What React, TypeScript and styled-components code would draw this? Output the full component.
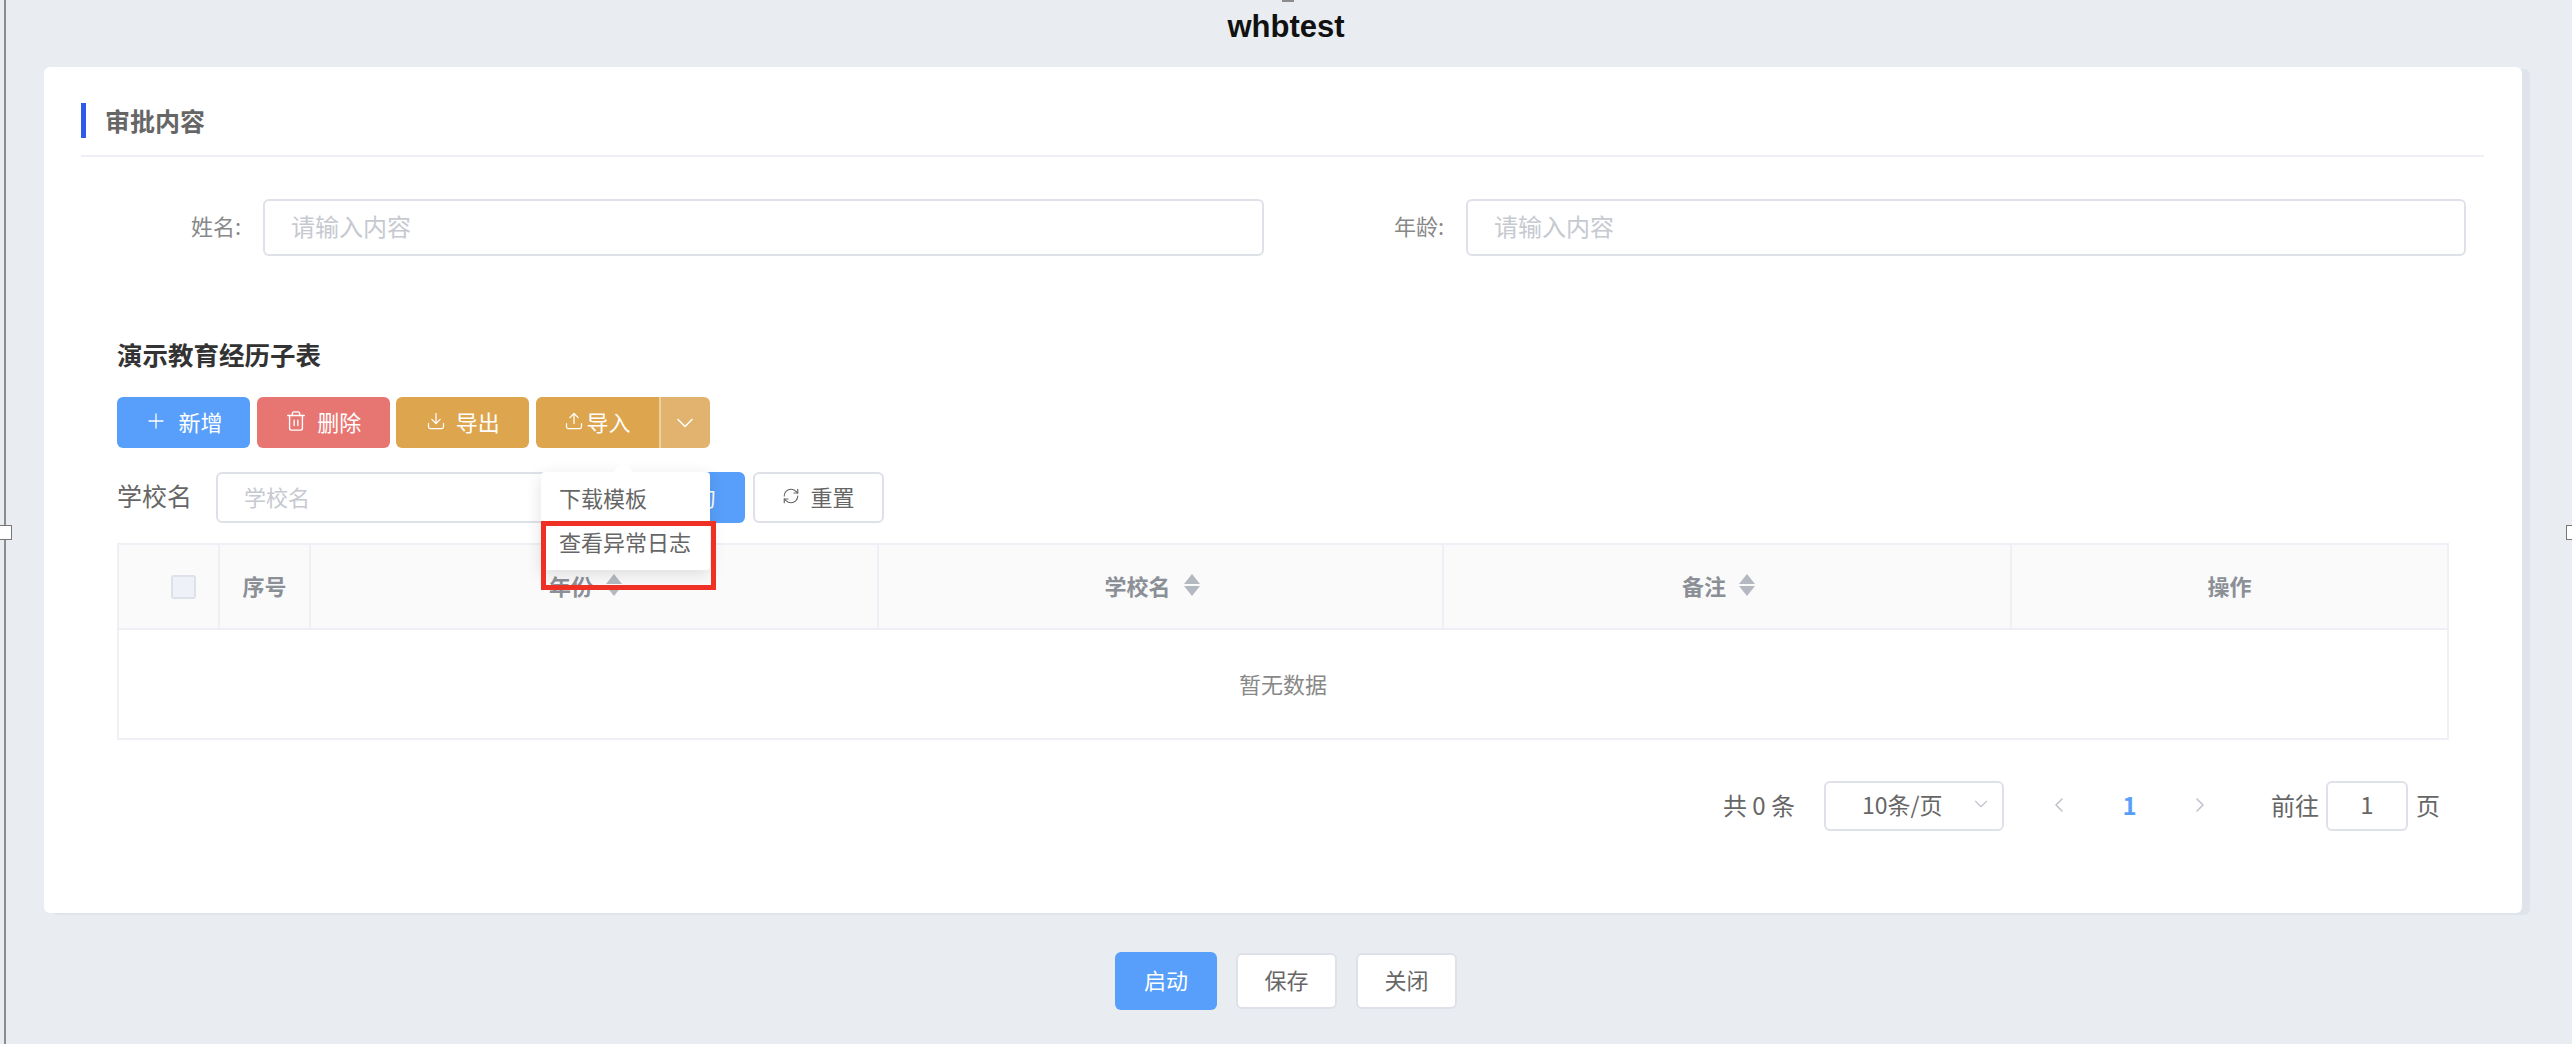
import React from "react";
import styled, { createGlobalStyle } from "styled-components";
import { Plus, Trash2, Download, Upload, ChevronDown, ChevronLeft, ChevronRight, RefreshCw, Search } from "lucide-react";

const Global = createGlobalStyle`
  html, body {
    margin: 0;
    padding: 0;
    background: #e9edf2;
  }
  * {
    box-sizing: border-box;
  }
  input::placeholder {
    color: #c6c9d0;
    opacity: 1;
  }
`;

const SortIcon = () => (
  <SortSvg width="18" height="24" viewBox="0 0 18 24">
    <path d="M9 1 L17 11 L1 11 Z" fill="#b4b8c0" />
    <path d="M9 23 L17 13 L1 13 Z" fill="#b4b8c0" />
  </SortSvg>
);

const columns = [
  { title: "年份", sort: true },
  { title: "学校名", sort: true },
  { title: "备注", sort: true },
  { title: "操作", sort: false },
];

const App = () => {
  return (
    <Page>
      <Global />
      <FrameLine />
      <Handle $side="left" />
      <Handle $side="right" />
      <TopTick />
      <Title>whbtest</Title>
      <Card>
        <SectionTitle>审批内容</SectionTitle>
        <FormRow>
          <FormLabel>姓名:</FormLabel>
          <TextInput placeholder="请输入内容" />
          <FormLabel>年龄:</FormLabel>
          <TextInput placeholder="请输入内容" />
        </FormRow>
        <SubTable>
          <SubHeading>演示教育经历子表</SubHeading>
          <Toolbar>
            <ActionButton $bg="#589ffb">
              <Plus size={24} strokeWidth={1.3} />
              新增
            </ActionButton>
            <ActionButton $bg="#e77572">
              <Trash2 size={22} strokeWidth={1.5} />
              删除
            </ActionButton>
            <ActionButton $bg="#dca54e">
              <Download size={20} strokeWidth={1.5} />
              导出
            </ActionButton>
            <ImportGroup>
              <ImportMain>
                <Upload size={20} strokeWidth={1.5} />
                导入
              </ImportMain>
              <ImportCaret>
                <ChevronDown size={28} strokeWidth={1.3} />
              </ImportCaret>
              <Menu>
                <MenuItem>下载模板</MenuItem>
                <MenuItem>查看异常日志</MenuItem>
              </Menu>
              <RedMark />
            </ImportGroup>
          </Toolbar>
          <SearchRow>
            <SearchLabel>学校名</SearchLabel>
            <SearchInput placeholder="学校名" />
            <SearchButton>
              <Search size={18} strokeWidth={1.5} />
              查询
            </SearchButton>
            <ResetButton>
              <RefreshCw size={18} strokeWidth={1.5} />
              重置
            </ResetButton>
          </SearchRow>
          <Table>
            <HeadRow>
              <HeadCell>
                <CheckBox />
              </HeadCell>
              <HeadCell>序号</HeadCell>
              {columns.map((c) => (
                <HeadCell key={c.title}>
                  {c.title}
                  {c.sort && <SortIcon />}
                </HeadCell>
              ))}
            </HeadRow>
            <EmptyRow>暂无数据</EmptyRow>
          </Table>
          <Pager>
            <PagerText>共 0 条</PagerText>
            <PageSize>
              10条/页
              <ChevronDown size={22} strokeWidth={1.2} color="#c0c4cc" />
            </PageSize>
            <PageArrow>
              <ChevronLeft size={26} strokeWidth={1.6} />
            </PageArrow>
            <PageNumber>1</PageNumber>
            <PageArrow>
              <ChevronRight size={26} strokeWidth={1.6} />
            </PageArrow>
            <GotoText>前往</GotoText>
            <GotoBox>1</GotoBox>
            <PagerText>页</PagerText>
          </Pager>
        </SubTable>
      </Card>
      <Footer>
        <StartButton>启动</StartButton>
        <PlainButton>保存</PlainButton>
        <PlainButton>关闭</PlainButton>
      </Footer>
    </Page>
  );
};

export default App;

const fontStack = `"Noto Sans CJK SC", "Liberation Sans", sans-serif`;

const Page = styled.div`
  position: relative;
  width: 2572px;
  height: 1044px;
  overflow: hidden;
  background: #e9edf2;
  font-family: ${fontStack};
  font-size: 22px;
  color: #666;
`;

const FrameLine = styled.div`
  position: absolute;
  left: 4px;
  top: 0;
  width: 2px;
  height: 100%;
  background: #8c8c8c;
`;

const Handle = styled.div<{ $side: "left" | "right" }>`
  position: absolute;
  top: 525px;
  ${(p) => (p.$side === "left" ? "left: -2px;" : "right: -8px;")}
  width: 14px;
  height: 15px;
  background: #fff;
  border: 1.5px solid #777;
`;

const TopTick = styled.div`
  position: absolute;
  left: 1282px;
  top: 0;
  width: 12px;
  height: 2px;
  background: #8c8c8c;
`;

const Title = styled.div`
  height: 67px;
  padding: 10px 0 0 0;
  line-height: 34px;
  text-align: center;
  font-family: "Liberation Sans", sans-serif;
  font-size: 31px;
  font-weight: 700;
  color: #111;
`;

const Card = styled.div`
  width: 2478px;
  height: 846px;
  margin-left: 44px;
  padding: 36px 38px 0 37px;
  background: #fff;
  border-radius: 6px;
  box-shadow: 8px 2px 0 #dfe3ea;
`;

const SectionTitle = styled.div`
  position: relative;
  height: 54px;
  padding-left: 24px;
  line-height: 35px;
  font-size: 25px;
  font-weight: 700;
  color: #666;
  border-bottom: 2px solid #eef0f5;

  &::before {
    content: "";
    position: absolute;
    left: 0;
    top: 0;
    width: 5px;
    height: 35px;
    background: #2f5bea;
  }
`;

const FormRow = styled.div`
  display: grid;
  grid-template-columns: 182px 1001px 202px 1000px;
  align-items: center;
  margin-top: 42px;
`;

const FormLabel = styled.label`
  padding: 0 22px 5px 0;
  text-align: right;
  font-size: 22px;
  color: #888;
`;

const TextInput = styled.input`
  width: 100%;
  height: 57px;
  padding: 0 26px 5px;
  border: 2px solid #dfe1e8;
  border-radius: 6px;
  outline: none;
  background: #fff;
  font-family: ${fontStack};
  font-size: 24px;
  color: #666;
`;

const SubTable = styled.div`
  padding: 0 35px 0 36px;
`;

const SubHeading = styled.div`
  margin-top: 83px;
  line-height: 30px;
  font-size: 25.5px;
  font-weight: 700;
  color: #333;
`;

const Toolbar = styled.div`
  display: flex;
  gap: 6.67px;
  margin-top: 28px;
`;

const ActionButton = styled.div<{ $bg: string }>`
  display: flex;
  align-items: center;
  justify-content: center;
  gap: 10px;
  width: 133px;
  height: 51px;
  padding-bottom: 4px;
  border-radius: 6px;
  background: ${(p) => p.$bg};
  color: #fff;
  font-size: 22px;
`;

const ImportGroup = styled.div`
  position: relative;
  display: flex;
  height: 51px;
`;

const ImportMain = styled.div`
  display: flex;
  align-items: center;
  justify-content: center;
  gap: 2px;
  width: 123px;
  padding-bottom: 4px;
  background: #dca54e;
  border-radius: 6px 0 0 6px;
  color: #fff;
  font-size: 22px;
`;

const ImportCaret = styled.div`
  display: flex;
  align-items: center;
  justify-content: center;
  width: 51px;
  background: #e2b36e;
  border-left: 2px solid #eccf9f;
  border-radius: 0 6px 6px 0;
  color: #fff;
`;

const Menu = styled.div`
  position: absolute;
  left: 5px;
  top: 75px;
  z-index: 3;
  width: 169px;
  height: 98px;
  padding: 5px 0 0 18px;
  background: #fff;
  border-radius: 4px;
  box-shadow: 0 4px 16px rgba(0, 0, 0, 0.12);

  &::before {
    content: "";
    position: absolute;
    left: 72px;
    top: -10px;
    border-left: 10px solid transparent;
    border-right: 10px solid transparent;
    border-bottom: 10px solid #fff;
  }
`;

const MenuItem = styled.div`
  height: 44px;
  line-height: 41px;
  font-size: 22px;
  color: #666;
`;

const RedMark = styled.div`
  position: absolute;
  left: 5px;
  top: 124px;
  z-index: 4;
  width: 175px;
  height: 69px;
  border: 5px solid #ee3124;
`;

const SearchRow = styled.div`
  display: flex;
  align-items: center;
  margin-top: 24px;
  height: 51px;
`;

const SearchLabel = styled.div`
  width: 99px;
  padding-bottom: 5px;
  font-size: 25px;
  color: #666;
`;

const SearchInput = styled.input`
  width: 390px;
  height: 51px;
  padding: 0 26px 4px;
  border: 2px solid #dfe1e8;
  border-radius: 6px;
  outline: none;
  font-family: ${fontStack};
  font-size: 22px;
`;

const SearchButton = styled.div`
  display: flex;
  align-items: center;
  justify-content: center;
  gap: 10px;
  width: 131px;
  height: 51px;
  margin-left: 8px;
  padding-bottom: 4px;
  border-radius: 6px;
  background: #589ffb;
  color: #fff;
  font-size: 22px;
`;

const ResetButton = styled.div`
  display: flex;
  align-items: center;
  justify-content: center;
  gap: 10px;
  width: 131px;
  height: 51px;
  margin-left: 8px;
  padding-bottom: 4px;
  border: 2px solid #dfe1e8;
  border-radius: 6px;
  background: #fff;
  font-size: 22px;
  color: #666;
`;

const Table = styled.div`
  margin-top: 20px;
  border: 2px solid #eef0f5;
`;

const HeadRow = styled.div`
  display: grid;
  grid-template-columns: 101px 91px 568px 565px 568px 1fr;
  height: 85px;
  background: #fafafb;
  border-bottom: 2px solid #eef0f5;
`;

const HeadCell = styled.div`
  display: flex;
  align-items: center;
  justify-content: center;
  gap: 12px;
  padding-bottom: 3px;
  border-right: 2px solid #eef0f5;
  font-size: 22px;
  font-weight: 700;
  color: #8b8f96;

  &:last-child {
    border-right: 0;
  }
`;

const SortSvg = styled.svg`
  margin-right: 16px;
`;

const CheckBox = styled.div`
  width: 25px;
  height: 24px;
  margin: 4px 0 0 30px;
  border: 2px solid #dfe1e8;
  border-radius: 3px;
  background: #eef1f8;
`;

const EmptyRow = styled.div`
  display: flex;
  align-items: center;
  justify-content: center;
  height: 108px;
  padding-bottom: 3px;
  font-size: 22px;
  color: #888;
`;

const Pager = styled.div`
  display: flex;
  align-items: center;
  justify-content: flex-end;
  height: 50px;
  margin-top: 41px;
  padding-right: 9px;
  font-size: 24px;
`;

const PagerText = styled.div`
  padding-bottom: 4px;
  font-size: 24px;
  color: #666;
`;

const PageSize = styled.div`
  display: flex;
  align-items: center;
  justify-content: space-between;
  width: 180px;
  height: 50px;
  margin: 0 43px 0 29px;
  padding: 0 10px 4px 36px;
  border: 2px solid #dfe1e8;
  border-radius: 6px;
  font-size: 23px;
  color: #666;
`;

const PageArrow = styled.div`
  display: flex;
  align-items: center;
  justify-content: center;
  width: 24px;
  padding-bottom: 3px;
  color: #c0c4cc;
`;

const PageNumber = styled.div`
  width: 117px;
  padding-bottom: 4px;
  text-align: center;
  font-size: 24px;
  font-weight: 700;
  color: #589ffb;
`;

const GotoText = styled.div`
  margin-left: 59px;
  padding-bottom: 4px;
  font-size: 24px;
  color: #666;
`;

const GotoBox = styled.div`
  width: 82px;
  height: 50px;
  margin: 0 8px 0 7px;
  border: 2px solid #dfe1e8;
  border-radius: 6px;
  line-height: 42px;
  text-align: center;
  font-size: 24px;
  color: #666;
`;

const Footer = styled.div`
  display: flex;
  align-items: center;
  justify-content: center;
  gap: 19px;
  margin-top: 39px;
  height: 58px;
`;

const StartButton = styled.div`
  width: 102px;
  height: 58px;
  line-height: 54px;
  text-align: center;
  border-radius: 6px;
  background: #589ffb;
  color: #fff;
  font-size: 22px;
`;

const PlainButton = styled.div`
  width: 101px;
  height: 56px;
  line-height: 48px;
  text-align: center;
  border: 2px solid #dfe1e8;
  border-radius: 6px;
  background: #fff;
  color: #666;
  font-size: 22px;
`;
